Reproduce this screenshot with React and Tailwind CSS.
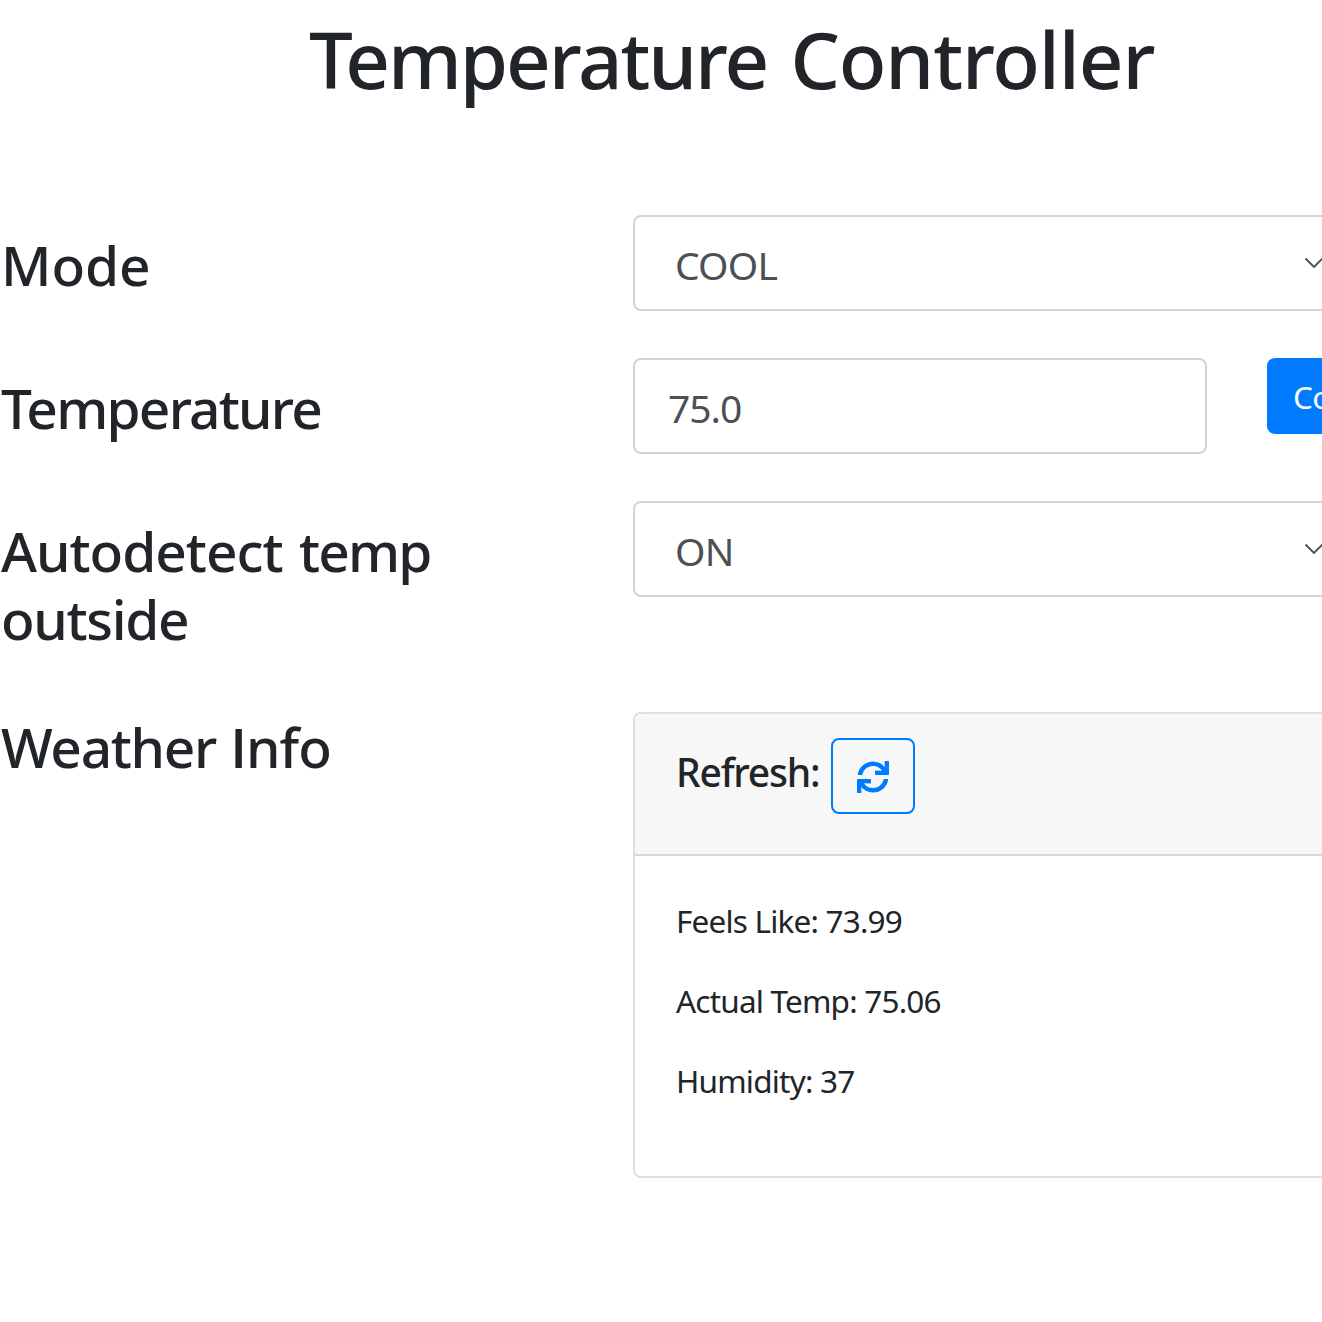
import { FaSync } from "react-icons/fa";

const weather = ["Feels Like: 73.99", "Actual Temp: 75.06", "Humidity: 37"];

function Label({ children, className = "pt-4" }) {
  return (
    <h2 className={`w-[633px] shrink-0 pr-[170px] pl-px text-[55px] leading-[68px] font-medium ${className}`}>
      {children}
    </h2>
  );
}

function Select({ value }) {
  return (
    <div className="flex h-24 w-[730px] shrink-0 items-center justify-between rounded-lg border-2 border-[#ced4da] bg-white pt-1 pr-[37px] pl-10 text-[39px] text-[#495057]">
      <span className="tracking-[-0.8px]">{value}</span>
      <svg width="20" height="12" viewBox="0 0 20 12" fill="none" className="mb-1 shrink-0">
        <path d="M1.5 1.5 L10 10 L18.5 1.5" stroke="#495057" strokeWidth="1.9" />
      </svg>
    </div>
  );
}

export default function App() {
  return (
    <main className="h-[1322px] w-full overflow-hidden bg-white font-['Noto_Sans',sans-serif] text-[#212529]">
      <h1 className="pt-[11px] pl-[309px] text-[78px] leading-[96px] font-medium whitespace-nowrap">
        <span className="tracking-[-2.1px]">Temperature</span>{" "}
        <span className="ml-[3px] tracking-[-1.1px]">Controller</span>
      </h1>
      <section className="mt-[108px] flex flex-col">
        <div className="flex h-[143px] items-start">
          <Label><span className="tracking-[-0.1px]">Mode</span></Label>
          <Select value="COOL" />
        </div>
        <div className="flex h-[143px] items-start">
          <Label><span className="tracking-[-1.75px]">Temperature</span></Label>
          <div className="flex h-24 w-[574px] shrink-0 items-center rounded-lg border-2 border-[#ced4da] pt-1 pl-[33px] text-[39px] text-[#495057]">
            <span className="tracking-[-1px]">75.0</span>
          </div>
          <button className="ml-[60px] h-[76px] w-[170px] shrink-0 rounded-lg bg-[#007bff] pt-0.5 pl-[26px] text-left text-[31.5px] tracking-[-0.75px] text-white">
            Confirm
          </button>
        </div>
        <div className="flex h-[211px] items-start">
          <Label>
            <span className="tracking-[-1px]">Autodetect</span>{" "}
            <span className="ml-[2px] tracking-[-1.8px]">temp</span>{" "}
            <span className="tracking-[-1.3px]">outside</span>
          </Label>
          <Select value="ON" />
        </div>
        <div className="flex items-start">
          <Label className="pt-px">
            <span className="tracking-[-1.3px]">Weather</span>{" "}
            <span className="tracking-[-1px]"><span className="font-['Open_Sans'] font-semibold">I</span>nfo</span>
          </Label>
          <div className="h-[466px] w-[730px] shrink-0 overflow-hidden rounded-lg border-2 border-[#dfdfdf]">
            <div className="flex h-[142px] items-start border-b-2 border-[#d8d8d8] bg-[#f7f7f7] pt-6 pl-[41px]">
              <h3 className="w-[155px] pt-[10px] text-[39px] leading-12 font-medium">
                <span className="tracking-[-1.2px]">Refresh:</span>
              </h3>
              <button className="flex h-[76px] w-[84px] items-center justify-center rounded-lg border-2 border-[#007bff] text-[#007bff]">
                <FaSync size={32} className="mt-0.5" />
              </button>
            </div>
            <div className="flex flex-col gap-8 pt-[41px] pl-[41px] text-[31.5px] leading-12 tracking-[-0.8px]">
              {weather.map((text) => (
                <p key={text}>{text}</p>
              ))}
            </div>
          </div>
        </div>
      </section>
    </main>
  );
}
